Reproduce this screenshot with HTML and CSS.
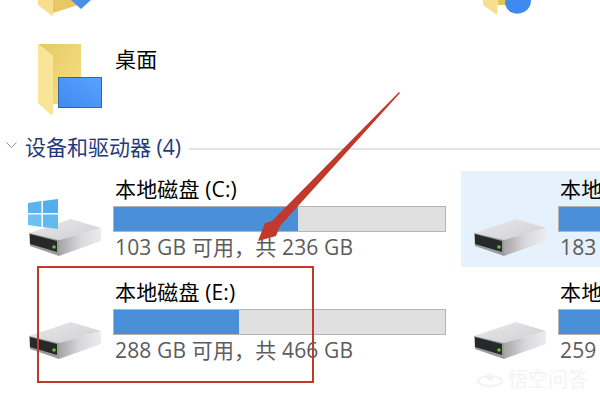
FILE: index.html
```html
<!DOCTYPE html>
<html lang="zh">
<head>
<meta charset="utf-8">
<title>此电脑</title>
<link rel="stylesheet" href="styles.css">
</head>
<body>
<svg class="defs" width="0" height="0" aria-hidden="true">
  <defs>
    <linearGradient id="gTop" x1="0" y1="0" x2="1" y2="1"><stop offset="0" stop-color="#e9e9ea"/><stop offset="1" stop-color="#cfcfd2"/></linearGradient>
    <linearGradient id="gSide" x1="0" y1="0" x2="1" y2="0"><stop offset="0" stop-color="#a5a5a8"/><stop offset=".5" stop-color="#d8d8da"/><stop offset="1" stop-color="#ececee"/></linearGradient>
    <linearGradient id="gBack" x1="0" y1="0" x2="1" y2="1"><stop offset="0" stop-color="#e6c966"/><stop offset="1" stop-color="#f7e084"/></linearGradient>
    <linearGradient id="gScreen" x1="0" y1="1" x2="1" y2="0"><stop offset="0" stop-color="#3f8af0"/><stop offset="1" stop-color="#5aa2ff"/></linearGradient>
    <symbol id="drive" viewBox="0 0 74 38">
      <polygon points="1,14 43,0 73,9 31,21" fill="url(#gTop)"/>
      <polygon points="31,21 73,9 73,22 31,37" fill="url(#gSide)"/>
      <polygon points="1,14 31,21 31,37 2,27" fill="#9a9b9d"/>
      <polygon points="2,15 29,22 29,33 2,25" fill="#26282a"/>
      <circle cx="26" cy="28" r="1.800" fill="#5fc62e"/>
    </symbol>
  </defs>
</svg>
<main class="page">
  <div class="clip-row">
    <svg class="clip-left" width="60" height="16" viewBox="0 0 60 16" aria-hidden="true">
      <polygon points="15,0 43,0 43,4 15,13" fill="#e8c863"/>
      <polygon points="0,0 15,0 15,16 13,15 0,5" fill="#f6e08f"/>
      <polygon points="33,0 53,0 43,9" fill="#4b8fe8"/>
    </svg>
    <svg class="clip-right" width="50" height="16" viewBox="0 0 50 16" aria-hidden="true">
      <polygon points="0,5 14,15 15,0 0,0" fill="#f6e08f"/>
      <rect x="15" y="0" width="12" height="5" fill="#e3c35e"/>
      <ellipse cx="35" cy="2" rx="13" ry="11.500" fill="#3f8af0" transform="rotate(-15 35 2)"/>
    </svg>
  </div>
  <div class="folder-row">
    <svg class="folder-icon" width="65" height="72" viewBox="0 0 65 72" aria-hidden="true">
      <polygon points="0,0 43,0 43,60 15,60 15,12" fill="url(#gBack)"/>
      <polygon points="0,0 15,12 15,71 12,70 0,59" fill="#f8e597"/>
      <rect x="20.500" y="33.500" width="43" height="30" fill="url(#gScreen)" stroke="#3565a8"/>
    </svg>
    <span class="item-name">桌面</span>
  </div>
  <header class="group-head">
    <svg class="chevron" width="11" height="7" viewBox="0 0 11 7" aria-hidden="true"><path d="M.5 .5l5 5 5-5" fill="none" stroke="#8a94a6" stroke-width="1"/></svg>
    <span class="group-title">设备和驱动器 (4)</span>
    <span class="group-rule"></span>
  </header>
  <section class="drives">
    <article class="drive">
      <span class="drive-icon">
        <svg class="win-logo" width="30" height="30" viewBox="0 0 30 30" aria-hidden="true"><polygon points="0,4 13.500,2 13.500,14 0,14" fill="#5bb4ee"/><polygon points="15,2 30,0 30,14 15,14" fill="#52aeed"/><polygon points="0,15.500 13.500,15.500 13.500,28 0,26" fill="#6cc0f2"/><polygon points="15,15.500 30,15.500 30,30 15,28" fill="#62b9f0"/></svg>
        <svg class="hdd" width="74" height="38" aria-hidden="true"><use href="#drive"/></svg>
      </span>
      <div class="drive-body">
        <div class="item-name">本地磁盘 (C:)</div>
        <div class="bar"><div class="fill" style="width:55.500%"></div></div>
        <div class="info">103 GB 可用，共 236 GB</div>
      </div>
    </article>
    <article class="drive selected">
      <span class="drive-icon"><svg class="hdd" width="74" height="38" aria-hidden="true"><use href="#drive"/></svg></span>
      <div class="drive-body">
        <div class="item-name">本地磁盘 (D:)</div>
        <div class="bar"><div class="fill" style="width:40%"></div></div>
        <div class="info">183 GB 可用，共 466 GB</div>
      </div>
    </article>
    <article class="drive">
      <span class="drive-icon"><svg class="hdd" width="74" height="38" aria-hidden="true"><use href="#drive"/></svg></span>
      <div class="drive-body">
        <div class="item-name">本地磁盘 (E:)</div>
        <div class="bar"><div class="fill" style="width:37.800%"></div></div>
        <div class="info">288 GB 可用，共 466 GB</div>
      </div>
    </article>
    <article class="drive">
      <span class="drive-icon"><svg class="hdd" width="74" height="38" aria-hidden="true"><use href="#drive"/></svg></span>
      <div class="drive-body">
        <div class="item-name">本地磁盘 (F:)</div>
        <div class="bar"><div class="fill" style="width:44%"></div></div>
        <div class="info">259 GB 可用，共 466 GB</div>
      </div>
    </article>
  </section>
  <svg class="arrow" width="600" height="400" viewBox="0 0 600 400" aria-hidden="true">
    <polygon points="399,92 400,93 280,226 276,236 258,241 265,223 272,221" fill="#c0392b"/>
  </svg>
  <div class="callout"></div>
  <div class="watermark">
    <svg width="26" height="14" viewBox="0 0 26 14" aria-hidden="true"><ellipse cx="13" cy="8" rx="12" ry="5" fill="none" stroke="#f3f3f3" stroke-width="2"/><circle cx="13" cy="4" r="3.500" fill="#f3f3f3"/></svg>
    <span>悟空问答</span>
  </div>
</main>
</body>
</html>
```
FILE: styles.css
```css
* { box-sizing: border-box; }
html, body { margin: 0; padding: 0; background: #fff; }
body { font-family: "Open Sans", "Noto Sans CJK SC", sans-serif; }
.defs { position: absolute; }
.page { position: relative; width: 600px; height: 400px; overflow: hidden; background: #fff; }

.clip-row { display: flex; height: 16px; padding-left: 38px; gap: 385px; }
.clip-left, .clip-right { display: block; flex: none; }

.folder-row { display: flex; gap: 12px; height: 72px; margin-top: 28px; padding-left: 38px; }
.folder-icon { display: block; flex: none; }
.folder-row .item-name { margin-top: 3px; padding-left: 0; }

.item-name { padding-left: 2px; font-size: 21px; line-height: 24px; letter-spacing: .15px; color: #000; white-space: nowrap; }

.group-head { display: flex; align-items: center; height: 24px; margin-top: 20px; padding-left: 6px; }
.chevron { flex: none; margin-right: 8px; margin-top: -5px; }
.group-title { margin-top: -2px; font-size: 21px; line-height: 24px; color: #1f3a7a; white-space: nowrap; }
.group-rule { flex: 1; height: 2px; background: #e3e3e3; margin-left: 8px; margin-top: 2px; }

.drives { display: grid; grid-template-columns: 445px 139px; grid-auto-rows: 96px; row-gap: 7px; margin-top: 11px; padding-left: 16px; }
.drive { display: flex; overflow: hidden; padding: 6px 0 0 12px; }
.drive.selected { background: #e5f1fd; }
.drive-icon { position: relative; display: block; flex: none; width: 74px; height: 80px; margin-right: 11px; }
.hdd { position: absolute; left: 0; top: 42px; display: block; }
.win-logo { position: absolute; left: 0; top: 22px; display: block; z-index: 1; }
.drive-body { flex: none; width: 333px; }

.bar { height: 26px; margin-top: 5px; background: #e0e0e0; border: 1px solid #b4b4b4; }
.fill { height: 100%; background: #4a90d9; }
.info { margin-top: 3px; padding-left: 2px; font-size: 21px; line-height: 24px; letter-spacing: .15px; color: #5c5c5c; white-space: nowrap; }

.arrow { position: absolute; left: 0; top: 0; pointer-events: none; }
.callout { position: absolute; left: 37px; top: 266px; width: 277px; height: 117px; border: 2.500px solid #c0392b; }
.watermark { position: absolute; left: 477px; top: 368px; display: flex; align-items: center; gap: 5px; font-size: 20px; line-height: 24px; color: #f3f3f3; white-space: nowrap; }
```
